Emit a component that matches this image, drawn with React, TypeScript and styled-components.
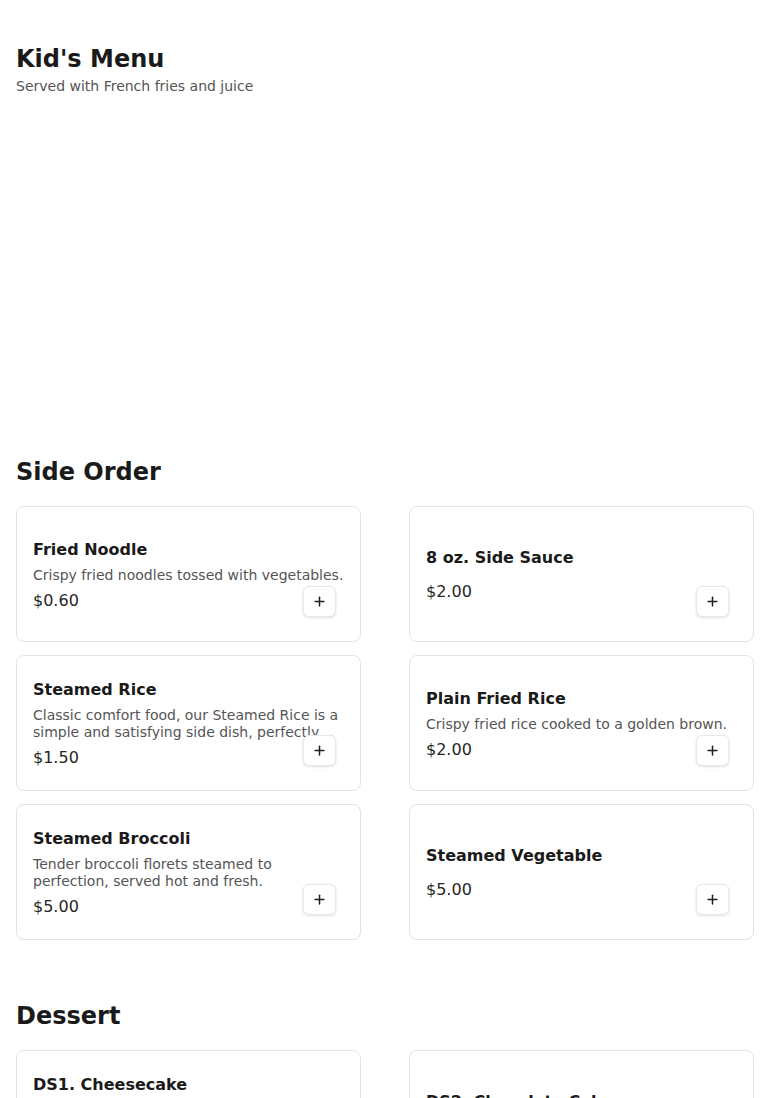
import React from "react";
import styled, { createGlobalStyle } from "styled-components";
import { Plus } from "lucide-react";

const GlobalStyle = createGlobalStyle`
  * { box-sizing: border-box; }
  body {
    margin: 0;
    background: #ffffff;
    font-family: "DejaVu Sans", "Noto Sans", sans-serif;
    color: #1a1a1a;
  }
`;

const Page = styled.main`
  padding: 45px 16px 40px;
`;

const Section = styled.section`
  margin-bottom: 62px;
`;

const SectionHeader = styled.header`
  margin-bottom: 19px;
`;

const SectionTitle = styled.h2`
  margin: 0;
  font-size: 24px;
  line-height: 29px;
  font-weight: 700;
  color: #1a1a1a;
`;

const SectionSubtitle = styled.p`
  margin: 4px 0 0;
  font-size: 14px;
  line-height: 17px;
  color: #555555;
`;

const EmptyList = styled.div`
  min-height: 282px;
`;

const Grid = styled.div`
  display: grid;
  grid-template-columns: 1fr 1fr;
  column-gap: 48px;
  row-gap: 13px;
`;

const Card = styled.article`
  position: relative;
  height: 136px;
  border: 1px solid #e3e3e3;
  border-radius: 8px;
  padding: 2px 16px 0;
  display: flex;
  flex-direction: column;
  justify-content: center;
  background: #fff;
`;

const ItemName = styled.h3`
  margin: 0 0 7px;
  font-size: 16px;
  line-height: 20px;
  font-weight: 700;
  color: #1a1a1a;
`;

const ItemDesc = styled.p`
  margin: 0;
  font-size: 14px;
  line-height: 17px;
  color: #555555;
  display: -webkit-box;
  -webkit-line-clamp: 2;
  -webkit-box-orient: vertical;
  overflow: hidden;
`;

const ItemPrice = styled.div`
  margin-top: 7px;
  font-size: 16px;
  line-height: 20px;
  color: #262626;
`;

const AddButton = styled.button`
  position: absolute;
  right: 24px;
  bottom: 24px;
  width: 33px;
  height: 31px;
  padding: 0;
  display: flex;
  align-items: center;
  justify-content: center;
  background: #ffffff;
  border: 1px solid #e8e8e8;
  border-radius: 6px;
  box-shadow: 0 1px 3px rgba(0, 0, 0, 0.12);
  color: #1f1f1f;
  cursor: pointer;
`;

type Item = { name: string; desc?: string; price: string };

const sideOrder: Item[] = [
  { name: "Fried Noodle", desc: "Crispy fried noodles tossed with vegetables.", price: "$0.60" },
  { name: "8 oz. Side Sauce", price: "$2.00" },
  {
    name: "Steamed Rice",
    desc: "Classic comfort food, our Steamed Rice is a simple and satisfying side dish, perfectly paired with any entrée.",
    price: "$1.50",
  },
  { name: "Plain Fried Rice", desc: "Crispy fried rice cooked to a golden brown.", price: "$2.00" },
  {
    name: "Steamed Broccoli",
    desc: "Tender broccoli florets steamed to perfection, served hot and fresh.",
    price: "$5.00",
  },
  { name: "Steamed Vegetable", price: "$5.00" },
];

const dessert: Item[] = [
  {
    name: "DS1. Cheesecake",
    desc: "Rich and creamy New York style cheesecake with a graham cracker crust.",
    price: "$4.50",
  },
  { name: "DS2. Chocolate Cake", price: "$4.50" },
];

function MenuCard({ item }: { item: Item }) {
  return (
    <Card>
      <ItemName>{item.name}</ItemName>
      {item.desc && <ItemDesc>{item.desc}</ItemDesc>}
      <ItemPrice>{item.price}</ItemPrice>
      <AddButton aria-label={`Add ${item.name}`}>
        <Plus size={15} strokeWidth={2.4} />
      </AddButton>
    </Card>
  );
}

export default function App() {
  return (
    <>
      <GlobalStyle />
      <Page>
        <Section>
          <SectionHeader>
            <SectionTitle>Kid's Menu</SectionTitle>
            <SectionSubtitle>Served with French fries and juice</SectionSubtitle>
          </SectionHeader>
          <EmptyList />
        </Section>
        <Section>
          <SectionHeader>
            <SectionTitle>Side Order</SectionTitle>
          </SectionHeader>
          <Grid>
            {sideOrder.map((it) => (
              <MenuCard key={it.name} item={it} />
            ))}
          </Grid>
        </Section>
        <Section>
          <SectionHeader>
            <SectionTitle>Dessert</SectionTitle>
          </SectionHeader>
          <Grid>
            {dessert.map((it) => (
              <MenuCard key={it.name} item={it} />
            ))}
          </Grid>
        </Section>
      </Page>
    </>
  );
}
